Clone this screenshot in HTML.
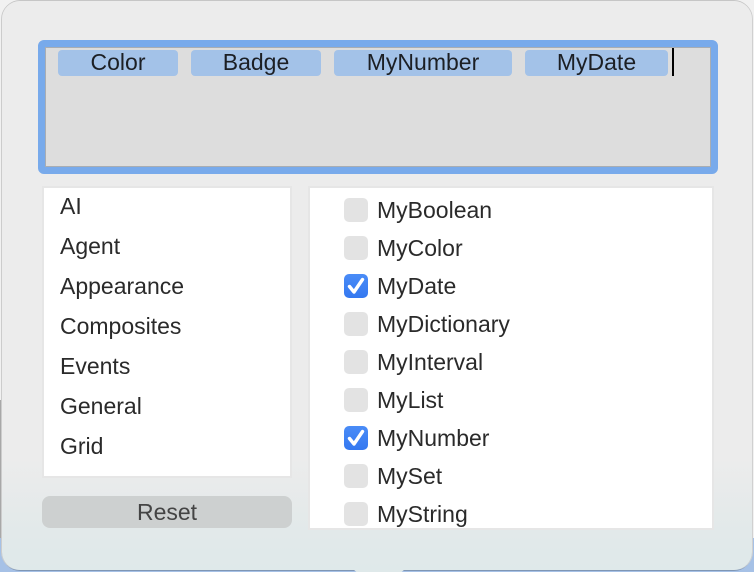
<!DOCTYPE html>
<html><head><meta charset="utf-8"><style>
html,body{margin:0;padding:0}
body{width:754px;height:572px;overflow:hidden;position:relative;background:#a6c1e6;font-family:"Liberation Sans",sans-serif}
.bgside{position:absolute;left:0;top:0;width:754px;height:538px;background:#f1f1f1}
.bgl{position:absolute;left:0;top:400px;width:2px;height:138px;background:#a8a8a8}
.win{position:absolute;left:2px;top:1px;width:750px;height:569px;border-radius:18px;background:linear-gradient(180deg,#ececec 0,#ececec 455px,#e9ebeb 480px,#e2e9ea 530px,#dfe9ea 569px);box-shadow:0 -1px 0 #c6c6c6,-1px 0 0 #cccccc,1px 0 0 #d0d0d0,0 1px 0 #7f96b5}
.notch{position:absolute;left:352px;top:568px;width:54px;height:4px;background:#dfe9ea;clip-path:polygon(0 0,100% 0,92% 100%,8% 100%)}
.tok{position:absolute;left:38px;top:40px;width:666px;height:120px;border:7px solid #78aaeb;border-radius:6px;background:#dddddd;box-shadow:inset 0 0 0 1px #a8adb3}
.chip{position:absolute;top:50px;height:26px;background:#a3c2e8;border-radius:4px;color:#1c1f24;font-size:23px;line-height:25px;text-align:center}
.caret{position:absolute;left:672px;top:48px;width:2px;height:28px;background:#000}
.panel{position:absolute;background:#fff;border:2px solid #e6e6e6;box-sizing:border-box}
.t{position:absolute;font-size:23px;line-height:26px;color:#2a2a2a;white-space:nowrap}
.cb{position:absolute;left:344px;width:24px;height:24px;border-radius:5px;background:#e3e3e3}
.cb.on{background:linear-gradient(180deg,#4a8cf7,#3478f0)}
.cb svg{position:absolute;left:0;top:0}
.btn{position:absolute;left:42px;top:496px;width:250px;height:32px;border-radius:8px;background:#cdd0d0;color:#444;font-size:23px;line-height:33px;text-align:center}
</style></head><body>
<div class="bgside"></div>
<div class="bgl"></div>
<div class="win"></div>
<div class="notch"></div>
<div class="tok"></div>
<div class="chip" style="left:58px;width:120px">Color</div>
<div class="chip" style="left:191px;width:130px">Badge</div>
<div class="chip" style="left:334px;width:178px">MyNumber</div>
<div class="chip" style="left:525px;width:143px">MyDate</div>
<div class="caret"></div>

<div class="panel" style="left:42px;top:186px;width:250px;height:292px"></div>
<div class="t" style="left:60px;top:193px">AI</div>
<div class="t" style="left:60px;top:233px">Agent</div>
<div class="t" style="left:60px;top:273px">Appearance</div>
<div class="t" style="left:60px;top:313px">Composites</div>
<div class="t" style="left:60px;top:353px">Events</div>
<div class="t" style="left:60px;top:393px">General</div>
<div class="t" style="left:60px;top:433px">Grid</div>

<div class="btn">Reset</div>

<div class="panel" style="left:308px;top:186px;width:406px;height:344px"></div>
<div class="cb" style="top:198px"></div><div class="t" style="left:377px;top:197px">MyBoolean</div>
<div class="cb" style="top:236px"></div><div class="t" style="left:377px;top:235px">MyColor</div>
<div class="cb on" style="top:274px"><svg width="24" height="24" viewBox="0 0 24 24"><path d="M5.5 12.5L10 18L18.5 5.5" fill="none" stroke="#fff" stroke-width="3.4" stroke-linecap="round" stroke-linejoin="round"/></svg></div><div class="t" style="left:377px;top:273px">MyDate</div>
<div class="cb" style="top:312px"></div><div class="t" style="left:377px;top:311px">MyDictionary</div>
<div class="cb" style="top:350px"></div><div class="t" style="left:377px;top:349px">MyInterval</div>
<div class="cb" style="top:388px"></div><div class="t" style="left:377px;top:387px">MyList</div>
<div class="cb on" style="top:426px"><svg width="24" height="24" viewBox="0 0 24 24"><path d="M5.5 12.5L10 18L18.5 5.5" fill="none" stroke="#fff" stroke-width="3.4" stroke-linecap="round" stroke-linejoin="round"/></svg></div><div class="t" style="left:377px;top:425px">MyNumber</div>
<div class="cb" style="top:464px"></div><div class="t" style="left:377px;top:463px">MySet</div>
<div class="cb" style="top:502px"></div><div class="t" style="left:377px;top:501px">MyString</div>
</body></html>
